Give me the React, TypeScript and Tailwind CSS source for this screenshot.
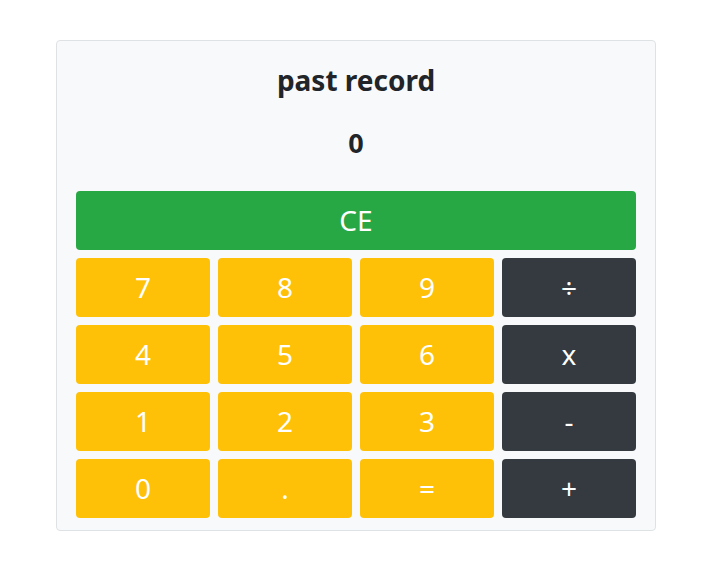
import React from "react";

const keys = [
  { label: "7", kind: "num" },
  { label: "8", kind: "num" },
  { label: "9", kind: "num" },
  { label: "÷", kind: "op" },
  { label: "4", kind: "num" },
  { label: "5", kind: "num" },
  { label: "6", kind: "num" },
  { label: "x", kind: "op" },
  { label: "1", kind: "num" },
  { label: "2", kind: "num" },
  { label: "3", kind: "num" },
  { label: "-", kind: "op" },
  { label: "0", kind: "num" },
  { label: ".", kind: "num" },
  { label: "=", kind: "num" },
  { label: "+", kind: "op" },
];

const App = () => {
  return (
    <div className="min-h-screen bg-white pt-10 pl-14 font-['Noto_Sans',sans-serif] text-[#212529]">
      <div className="w-[600px] rounded border border-[#dfe2e5] bg-[#f8f9fa] px-[19px] pt-[23px] pb-3">
        <h3 className="text-center text-[28px] font-bold leading-[1.2] mb-[29px]">past record</h3>
        <h4 className="text-center text-[27px] font-bold leading-[1.2] mb-[32px]">0</h4>
        <button className="flex h-[59px] w-full items-center justify-center rounded bg-[#28a745] text-[28px] text-white">
          CE
        </button>
        <div className="mt-2 grid grid-cols-4 gap-2">
          {keys.map((k) => (
            <button
              key={k.label}
              className={
                k.kind === "num"
                  ? "flex h-[59px] items-center justify-center rounded bg-[#ffc107] text-[28px] text-white"
                  : "flex h-[59px] items-center justify-center rounded bg-[#343a40] text-[28px] text-white"
              }
            >
              {k.label}
            </button>
          ))}
        </div>
      </div>
    </div>
  );
};

export default App;
